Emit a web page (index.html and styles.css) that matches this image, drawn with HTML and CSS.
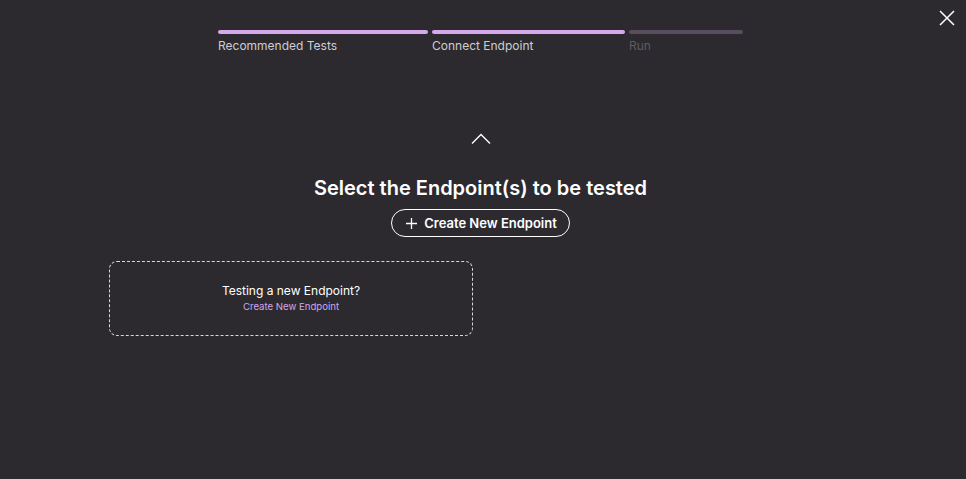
FILE: index.html
```html
<!DOCTYPE html>
<html>
<head>
<meta charset="utf-8">
<link rel="stylesheet" href="styles.css">
</head>
<body>
<div class="page">
  <button class="close" aria-label="Close">
    <svg width="16" height="16" viewBox="0 0 16 16"><path d="M1 1 L15 15 M15 1 L1 15" stroke="#ffffff" stroke-width="1.5" fill="none"/></svg>
  </button>
  <div class="steps">
    <div class="step s1"><div class="bar done"></div><span class="label">Recommended Tests</span></div>
    <div class="step s2"><div class="bar done"></div><span class="label">Connect Endpoint</span></div>
    <div class="step s3"><div class="bar todo"></div><span class="label muted">Run</span></div>
  </div>
  <div class="main">
    <svg class="chev" width="20" height="11" viewBox="0 0 20 11"><path d="M1 10.5 L10 1.5 L19 10.5" stroke="#ffffff" stroke-width="1.4" fill="none"/></svg>
    <h1 class="title">Select the Endpoint(s) to be tested</h1>
    <button class="create"><svg width="11" height="11" viewBox="0 0 11 11"><path d="M5.5 0 V11 M0 5.5 H11" stroke="#fff" stroke-width="1.3"/></svg>Create New Endpoint</button>
    <div class="cards">
      <div class="card">
        <div class="card-title">Testing a new Endpoint?</div>
        <a class="card-link">Create New Endpoint</a>
      </div>
    </div>
  </div>
</div>
</body>
</html>
```
FILE: styles.css
```css
* { box-sizing: border-box; }
html, body { margin: 0; padding: 0; background: #2c2a2f; }
body { font-family: Inter, "Noto Sans", sans-serif; color: #ffffff; }
.page { width: 966px; height: 479px; position: relative; }
.close { position: absolute; top: 10px; right: 11px; background: none; border: 0; padding: 0; width: 16px; height: 16px; display: flex; align-items: center; justify-content: center; cursor: pointer; }
.steps { display: flex; gap: 4px; padding-top: 30px; margin-left: 218px; }
.step { display: flex; flex-direction: column; gap: 5px; }
.s1 { width: 210px; }
.s2 { width: 193px; }
.s3 { width: 114px; }
.bar { height: 4px; border-radius: 2px; }
.bar.done { background: #d6a9ec; }
.bar.todo { background: #5a4d5f; }
.label { font-size: 12px; line-height: 14px; color: #cfcdd2; }
.label.muted { color: #5e5b62; }
.main { width: 961px; display: flex; flex-direction: column; align-items: center; padding-top: 80px; }
.chev { display: block; }
.title { margin: 32px 0 0; font-size: 20px; line-height: 24px; font-weight: 600; letter-spacing: 0; }
.create { margin-top: 9px; height: 28px; padding: 0 12px 0 14px; border: 1px solid #ffffff; border-radius: 14px; background: transparent; color: #ffffff; font-family: Inter, sans-serif; font-size: 13px; font-weight: 600; display: flex; align-items: center; gap: 7px; }
.cards { align-self: stretch; display: grid; grid-template-columns: 364px 364px; gap: 14px; padding-left: 109px; margin-top: 24px; }
.card { height: 75px; border: 1px dashed #d9d7dc; border-radius: 8px; display: flex; flex-direction: column; align-items: center; justify-content: center; padding-bottom: 2px; }
.card-title { font-size: 12px; line-height: 15px; color: #ffffff; }
.card-link { font-size: 9.6px; line-height: 13px; color: #d3a6ea; margin-top: 2px; }
```
